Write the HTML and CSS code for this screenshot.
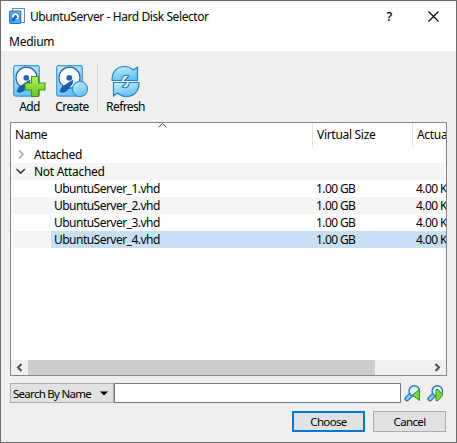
FILE: index.html
```html
<!DOCTYPE html>
<html lang="en">
<head>
<meta charset="utf-8">
<title>UbuntuServer - Hard Disk Selector</title>
<link rel="stylesheet" href="styles.css">
</head>
<body>
<svg class="defs" width="0" height="0" aria-hidden="true">
  <defs>
    <linearGradient id="ice" x1="0" y1="0" x2="0.4" y2="1"><stop offset="0" stop-color="#c9f0ff"/><stop offset="1" stop-color="#69c2f5"/></linearGradient>
    <linearGradient id="leaf" x1="0" y1="0" x2="0" y2="1"><stop offset="0" stop-color="#b4f05a"/><stop offset="1" stop-color="#62cc1c"/></linearGradient>
    <symbol id="disk" viewBox="0 0 32 32">
      <rect x=".7" y=".7" width="25.600" height="30.400" rx="2" fill="url(#ice)" stroke="#3c9ad8" stroke-width="1.200"/>
      <circle cx="13.500" cy="12.700" r="10.500" fill="#fff" stroke="#2462ae" stroke-width="1.200"/>
      <path d="M3.500 26.500 5.500 22l8.500-5.500 3.500-2-1 4.500-6 7.500-4.500 1.500z" fill="#1c5bb0"/>
      <circle cx="13.300" cy="12.800" r="2.900" fill="#2462ae"/>
    </symbol>
    <symbol id="lens" viewBox="0 0 17 17">
      <path d="M6.500 10.300 3 13.800" stroke="#1c68b2" stroke-width="5" stroke-linecap="round"/>
      <path d="M6.500 10.300 3.100 13.700" stroke="#83cbf7" stroke-width="3" stroke-linecap="round"/>
      <circle cx="10.300" cy="6" r="5.200" fill="#e4f7ff" stroke="#2374bd" stroke-width="1.400"/>
    </symbol>
  </defs>
</svg>
<div class="window">
  <header class="titlebar">
    <svg class="app-icon" width="16" height="16" viewBox="0 0 16 16"><rect x="3.500" y=".5" width="12" height="14" fill="#fff" stroke="#7b8997"/><rect x=".7" y="3" width="11" height="12.300" rx="1" fill="#55b4f2" stroke="#1976c8" stroke-width="1.200"/><circle cx="6.500" cy="8.500" r="4" fill="#fff" stroke="#247bc8"/><path d="m2 13 1-3 3-1.500 2.500.5-3 4-1.500.5z" fill="#1b68bd"/><circle cx="6.500" cy="8.300" r="1.200" fill="#1b68bd"/></svg>
    <span class="title">UbuntuServer - Hard Disk Selector</span>
    <span class="help">?</span>
    <svg class="close" width="11" height="11" viewBox="0 0 11 11"><path d="m.5.500 10 10m0-10-10 10" stroke="#000" stroke-width="1.100"/></svg>
  </header>
  <nav class="menubar"><span class="menu">Medium</span></nav>
  <div class="toolbar">
    <div class="tool add"><svg width="33" height="33" viewBox="0 0 33 33"><use href="#disk" width="32" height="32"/><path d="M18.500 11.500h7v6.500h6.500v7h-6.500v6.500h-7V25H12v-7h6.500z" fill="url(#leaf)" stroke="#3d9421" stroke-width="1.100"/></svg><span>Add</span></div>
    <div class="tool create"><svg width="33" height="33" viewBox="0 0 33 33"><use href="#disk" width="32" height="32"/><circle cx="24" cy="24" r="7.600" fill="url(#ice)" stroke="#3291d2" stroke-width="1.100"/></svg><span>Create</span></div>
    <div class="tool refresh"><svg width="29" height="33" viewBox="0 0 29 33"><g fill="url(#ice)" stroke="#2583ca" stroke-width="1.200" stroke-linejoin="round"><path d="M1 15.500C1 6.500 6 1.500 13.500 1.500c3.500 0 6.500 1.200 9 3.500L26.500 2v13.500H13.500l4.500-4.500c-3.500-1.800-7-.2-7.500 4.500z"/><path d="M28 17.500c0 9-5 14-12.500 14-3.500 0-6.500-1.200-9-3.500L2.500 31V17.500h13L11 22c3.500 1.800 7 .2 7.500-4.500z"/></g></svg><span>Refresh</span></div>
  </div>
  <main class="tree">
    <div class="row head"><span class="name">Name</span><span class="vs">Virtual Size</span><span class="as">Actual Size</span>
      <svg class="sort" width="9" height="5" viewBox="0 0 9 5"><path d="m.5 4.500 4-4 4 4" fill="none" stroke="#555"/></svg></div>
    <div class="row group"><svg width="20" height="17" viewBox="0 0 20 17"><path d="m8 4.500 4 4-4 4" fill="none" stroke="#a0a0a0" stroke-width="1.400"/></svg><span>Attached</span></div>
    <div class="row group alt"><svg width="20" height="17" viewBox="0 0 20 17"><path d="m5.500 6 4.200 4 4.200-4" fill="none" stroke="#404040" stroke-width="1.700"/></svg><span>Not Attached</span></div>
    <div class="row"><span class="file">UbuntuServer_1.vhd</span><span class="size">1.00 GB</span><span class="size">4.00 KB</span></div>
    <div class="row alt"><span class="file">UbuntuServer_2.vhd</span><span class="size">1.00 GB</span><span class="size">4.00 KB</span></div>
    <div class="row"><span class="file">UbuntuServer_3.vhd</span><span class="size">1.00 GB</span><span class="size">4.00 KB</span></div>
    <div class="row alt selected"><span class="file">UbuntuServer_4.vhd</span><span class="size">1.00 GB</span><span class="size">4.00 KB</span></div>
    <div class="scrollbar"><svg width="17" height="15" viewBox="0 0 17 15"><path d="M10.500 4 7 7.500l3.500 3.500" fill="none" stroke="#505050" stroke-width="2"/></svg><i class="thumb"></i><svg class="right" width="17" height="15" viewBox="0 0 17 15"><path d="M6.500 4 10 7.500 6.500 11" fill="none" stroke="#505050" stroke-width="2"/></svg></div>
  </main>
  <div class="search">
    <div class="combo"><span>Search By Name</span><svg width="8" height="5" viewBox="0 0 8 5"><path d="M0 .5h8l-4 4z"/></svg></div>
    <div class="field"></div>
    <svg class="find" width="17" height="17" viewBox="0 0 17 17"><use href="#lens" width="17" height="17"/><path d="M15.500 4.500v11L8.500 10z" fill="#78dc28" stroke="#2f8d1d"/></svg>
    <svg class="find next" width="17" height="17" viewBox="0 0 17 17"><use href="#lens" width="17" height="17"/><path d="M9 4.500v11h2l5-5.500-5-5.500z" fill="#78dc28" stroke="#2f8d1d"/></svg>
  </div>
  <footer class="actions"><div class="button primary"><span>Choose</span></div><div class="button"><span>Cancel</span></div></footer>
</div>
</body>
</html>
```
FILE: styles.css
```css
* { box-sizing: border-box; }
body { margin: 0; overflow: hidden; font: 12px/17px "Noto Sans", "Open Sans", sans-serif; color: #000; letter-spacing: -0.3px; }
svg { display: block; flex: none; }
span { white-space: pre; }
.defs { position: absolute; }
.window { width: 457px; height: 443px; border: 1px solid #6d6d6d; background: #efefef; display: flex; flex-direction: column; }
.titlebar { height: 30px; flex: none; background: #fff; display: flex; align-items: center; padding: 0 17px 0 8px; }
.title { margin-left: 5px; letter-spacing: -0.42px; }
.help { margin-left: auto; margin-right: 36px; font-size: 13px; font-weight: 500; }
.menubar { height: 20px; flex: none; background: #fff; padding: 2px 8px; }
.menu { display: block; letter-spacing: -0.25px; }
.toolbar { height: 71px; flex: none; display: flex; padding-top: 14px; }
.tool { display: flex; flex-direction: column; align-items: center; height: 48px; letter-spacing: -0.6px; }
.tool span { line-height: 17px; }
.add { width: 33px; margin-left: 12px; }
.create { width: 41px; margin-left: 5px; padding-left: 1px; }
.refresh { width: 56px; margin-left: 5px; border-left: 1px solid #d2d2d2; }
.tree { width: 437px; height: 254px; flex: none; margin-left: 9px; border: 1px solid #828790; background: #fff; display: flex; flex-direction: column; overflow: hidden; }
.row { position: relative; height: 17px; flex: none; display: grid; grid-template-columns: 302px 100px 100px; }
.head { height: 23px; line-height: 24px; grid-template-columns: 301px 100px 100px; }
.name { padding-left: 4px; letter-spacing: -0.45px; }
.vs, .as { padding-left: 4px; border-left: 1px solid #e2e2e2; }
.sort { position: absolute; left: 147px; top: 0; }
.group { display: flex; }
.group span { margin-left: 3px; }
.alt { background: #f5f5f5; }
.file { margin-left: 40px; padding-left: 3px; letter-spacing: -0.52px; }
.size { padding-left: 3px; letter-spacing: -0.6px; }
.selected span { background: #c7e0f6; }
.scrollbar { height: 15px; margin-top: auto; display: flex; background: #f0f0f0; }
.thumb { width: 347px; background: #cdcdcd; }
.right { margin-left: auto; }
.search { height: 20px; flex: none; margin: 7px 0 0 9px; display: flex; align-items: center; }
.combo { width: 104px; height: 20px; border: 1px solid #adadad; background: #e1e1e1; display: flex; align-items: center; justify-content: space-between; padding: 0 5px 0 2px; font-size: 11.5px; letter-spacing: -0.72px; }
.field { width: 287px; height: 20px; border: 1px solid #7a7a7a; background: #fff; }
.find { margin-left: 3px; }
.next { margin-left: 6px; }
.actions { display: flex; margin: 8px 0 0 291px; gap: 8px; }
.button { width: 73px; height: 21px; border: 1px solid #adadad; background: #e1e1e1; display: flex; align-items: center; justify-content: center; font-size: 11.5px; letter-spacing: -0.65px; }
.primary { border: 2px solid #0078d7; }
```
